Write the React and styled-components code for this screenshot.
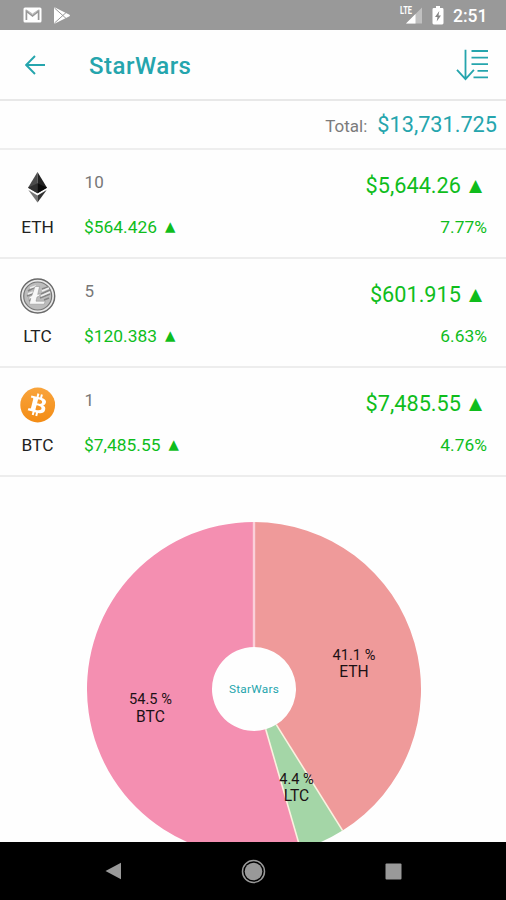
import React from "react";
import styled, { createGlobalStyle } from "styled-components";

const TEAL = "#25a5ad";
const GREEN = "#0fbd1c";

const GlobalStyle = createGlobalStyle`
  * { box-sizing: border-box; }
  html, body { margin: 0; padding: 0; background: #fff; overflow: hidden; }
  body { font-family: Roboto, "Liberation Sans", sans-serif; }
  svg { display: block; }
`;

const Screen = styled.div`
  width: 506px;
  height: 900px;
  display: flex;
  flex-direction: column;
  overflow: hidden;
  background: #fefefe;
`;

const StatusBar = styled.header`
  height: 30px;
  flex: none;
  display: flex;
  align-items: center;
  justify-content: space-between;
  padding: 0 19px 0 23px;
  background: #999;
`;

const StatusGroup = styled.div`
  display: flex;
  align-items: center;
  gap: ${(p) => p.$gap}px;
`;

const Clock = styled.span`
  color: #fff;
  font-size: 17.5px;
  font-weight: 500;
  line-height: 20px;
  margin-top: 2px;
  width: 34px;
  text-align: right;
`;

const AppBar = styled.div`
  height: 70.5px;
  flex: none;
  display: flex;
  align-items: center;
  padding: 1px 17px 0 25px;
  border-bottom: 2px solid #e8e8e8;
`;

const Title = styled.h1`
  flex: 1;
  margin: 2px 0 0 44px;
  color: ${TEAL};
  font-size: 24px;
  font-weight: 500;
  letter-spacing: 0.5px;
  line-height: 30px;
`;

const TotalBar = styled.div`
  height: 49.5px;
  flex: none;
  display: flex;
  align-items: baseline;
  justify-content: flex-end;
  gap: 10px;
  padding: 10.5px 9px 0 0;
  border-bottom: 2px solid #eee;
`;

const TotalLabel = styled.span`
  color: #7b7b7b;
  font-size: 17px;
`;

const TotalValue = styled.span`
  color: ${TEAL};
  font-size: 21.7px;
  line-height: 28px;
`;

const Row = styled.section`
  height: 109px;
  flex: none;
  display: grid;
  grid-template-columns: 75px 1fr auto;
  padding-right: 19px;
  border-bottom: 2px solid #ededed;
`;

const Cell = styled.div`
  display: grid;
  grid-template-rows: 54px 24px;
  row-gap: 2px;
  padding-top: 9px;
  align-items: center;
  justify-items: ${(p) => p.$align};
  padding-left: ${(p) => p.$left || 0}px;
`;

const CoinBadge = styled.div`
  padding-top: 2px;
`;

const Ticker = styled.span`
  color: #222;
  font-size: 17.3px;
  line-height: 24px;
`;

const Amount = styled.span`
  color: #777;
  font-size: 17px;
  line-height: 20px;
  margin-top: -8px;
  margin-left: 0.5px;
  letter-spacing: 0.2px;
`;

const Money = styled.span`
  display: flex;
  align-items: baseline;
  gap: 8px;
  color: ${GREEN};
  font-size: ${(p) => (p.$large ? 21.7 : 17.4)}px;
  line-height: 24px;
  margin-right: ${(p) => (p.$large ? 5 : 0)}px;
`;

const Up = styled.span`
  font-family: "DejaVu Sans", sans-serif;
  font-size: ${(p) => (p.$large ? 17 : 13.5)}px;
  line-height: 1;
  transform: translateY(-2px);
`;

const ChartArea = styled.main`
  flex: 1;
  min-height: 0;
  overflow: hidden;
  display: flex;
  justify-content: center;
  align-items: flex-start;
  padding: 45px 0 0 1px;
`;

const SliceLabel = styled.text`
  fill: #1c1115;
  font-size: ${(p) => p.$size}px;
  text-anchor: middle;
`;

const CenterLabel = styled.text`
  fill: ${TEAL};
  font-size: 11.8px;
  letter-spacing: 0.25px;
  text-anchor: middle;
`;

const NavBar = styled.nav`
  height: 58px;
  flex: none;
  display: flex;
  align-items: center;
  justify-content: space-between;
  padding: 0 104px 0 105px;
  background: #000;
`;

const MailIcon = () => (
  <svg width="19" height="16" viewBox="0 0 19 16">
    <rect x="0.5" y="0.5" width="18" height="15" rx="1.5" fill="#fff" />
    <path d="M3.4 13V4.2L9.5 9l6.1-4.8V13" fill="none" stroke="#999" strokeWidth="1.7" />
    <path d="M3.2 2.8L9.5 7l6.3-4.2" fill="none" stroke="#999" strokeWidth="0.7" />
  </svg>
);

const PlayIcon = () => (
  <svg width="18" height="17" viewBox="0 0 18 17">
    <path d="M1 1.2Q1 .2 2 .6L16.5 7.8Q17.5 8.5 16.5 9.2L2 16.4Q1 16.8 1 15.8Z" fill="#fff" />
    <path d="M1.5 1L13 11.4M1.5 16L13 5.6" fill="none" stroke="#999" strokeWidth="1" />
  </svg>
);

const SignalIcon = () => (
  <svg width="24" height="20" viewBox="0 0 24 20">
    <path d="M7 18.5L23 2.5V18.5Z" fill="#c0c0c0" />
    <path d="M7 18.5L16.5 9V18.5Z" fill="#fff" />
    <text x="1" y="9" fill="#fff" fontSize="10" fontWeight="700" textLength="12" lengthAdjust="spacingAndGlyphs">LTE</text>
  </svg>
);

const BatteryIcon = () => (
  <svg width="12" height="19" viewBox="0 0 12 19">
    <path d="M4 0h4v2h2.2Q11.5 2 11.5 3.4V17Q11.5 18.4 10.2 18.4H1.8Q.5 18.4 .5 17V3.4Q.5 2 1.8 2H4Z" fill="#fff" />
    <path d="M7.3 5L3 11h2.5L4.7 15.6 9 9.5H6.5Z" fill="#858585" />
  </svg>
);

const BackArrow = () => (
  <svg width="20" height="20" viewBox="0 0 20 20">
    <path d="M20 10H1.6M10 1L1.2 10l8.8 9" fill="none" stroke={TEAL} strokeWidth="1.9" />
  </svg>
);

const SortIcon = () => (
  <svg width="33" height="32" viewBox="0 0 33 32">
    <g fill="none" stroke={TEAL} strokeWidth="1.8">
      <path d="M9.5 .8V30M1 20.8l8.5 9.4 8.4-9.4" />
      <path d="M15.5 2H32M15.5 8.6H32M15.5 15.1H32M21.5 21.8H32M17.5 28.4H32" />
    </g>
  </svg>
);

const EthIcon = () => (
  <svg width="36" height="36" viewBox="0 0 36 36">
    <path d="M17.5 3L8 18.8 17.5 24.3Z" fill="#4b4b4b" />
    <path d="M17.5 3l9.5 15.8L17.5 24.3Z" fill="#222" />
    <path d="M17.5 14.2L8 18.8 17.5 24.3Z" fill="#303030" />
    <path d="M17.5 14.2l9.5 4.6L17.5 24.3Z" fill="#0b0b0b" />
    <path d="M8.3 21.1L17.5 26.5V33.6Z" fill="#777" />
    <path d="M26.7 21.1L17.5 26.5V33.6Z" fill="#333" />
  </svg>
);

const LtcIcon = () => (
  <svg width="36" height="36" viewBox="0 0 36 36">
    <circle cx="17.7" cy="18" r="17" fill="#e9e9e9" stroke="#696969" strokeWidth="1.4" />
    <circle cx="17.7" cy="18" r="14" fill="#bcbcbc" stroke="#777" strokeWidth="1.2" />
    <path d="M8 13l7-4M7 18l8-3M9 23l4-2M22 11l6-2M21 16l9-4M20 20l10-4M24 22l5-2" stroke="#858585" strokeWidth="1.6" />
    <path d="M10 10l6-2M8 16l5-2M22 13l7-3M21 18l9-4" stroke="#efefef" strokeWidth="1.4" />
    <path d="M15 8.5h4.5l-1.8 8 2.5-1-.7 2.5-2.5 1-1 4.2h9.2l-1 3H9.2l1.6-5.8-2.2.9.7-2.6 2.5-1Z" fill="#f7f7f7" stroke="#8a8a8a" strokeWidth="0.5" />
  </svg>
);

const BtcIcon = () => (
  <svg width="36" height="36" viewBox="0 0 36 36">
    <defs>
      <linearGradient id="btcFill" x1="0" y1="0" x2="0" y2="1">
        <stop offset="0" stopColor="#f9a43c" />
        <stop offset="1" stopColor="#f38c15" />
      </linearGradient>
    </defs>
    <circle cx="17.7" cy="18" r="17.4" fill="url(#btcFill)" />
    <g transform="translate(-0.2 -0.3) scale(1.13)">
      <path
        fill="#fff"
        fillRule="evenodd"
        d="M23.2 14c.3-2.1-1.3-3.3-3.5-4l.7-2.9-1.7-.4-.7 2.8-1.4-.3.7-2.8-1.7-.5-.7 2.9-4.6-1.1-.5 1.8s1.3.3 1.3.3c.7.2.8.6.8 1l-2 8c-.1.2-.3.5-.8.4l-1.3-.3-.8 2 4.3 1.1-.7 2.9 1.7.4.7-2.8 1.4.3-.7 2.9 1.7.4.7-2.9c3 .6 5.2.3 6.2-2.4.7-2.1 0-3.4-1.6-4.2 1.2-.3 2-1 2.3-2.6zm-4 5.6c-.6 2.1-4.2 1-5.4.7l1-3.8c1.1.3 4.9.8 4.4 3.1zm.5-5.6c-.5 2-3.4 1-4.4.7l.9-3.5c1 .3 4 .7 3.5 2.8z"
      />
    </g>
  </svg>
);

const CX = 167;
const CY = 167;
const R = 167;
const HOLE = 42;

const at = (r, share) => {
  const a = share * Math.PI * 2;
  return `${CX + r * Math.sin(a)} ${CY - r * Math.cos(a)}`;
};

const slicePath = (from, to) => {
  const big = to - from > 0.5 ? 1 : 0;
  return `M${at(HOLE, from)}L${at(R, from)}A${R} ${R} 0 ${big} 1 ${at(R, to)}L${at(HOLE, to)}A${HOLE} ${HOLE} 0 ${big} 0 ${at(HOLE, from)}Z`;
};

const slices = [
  { name: "ETH", pct: "41.1 %", from: 0, to: 0.411, fill: "#ef9a9a", x: 267, y: 138 },
  { name: "LTC", pct: "4.4 %", from: 0.411, to: 0.455, fill: "#a4d6a7", x: 209.5, y: 262 },
  { name: "BTC", pct: "54.5 %", from: 0.455, to: 1, fill: "#f48fb1", x: 63.5, y: 182.3 },
];

const Pie = () => (
  <svg width="334" height="334" viewBox="0 0 334 334">
    {slices.map((s) => (
      <path key={s.name} d={slicePath(s.from, s.to)} fill={s.fill} />
    ))}
    {slices.map((s) => (
      <path key={s.name} d={`M${at(HOLE, s.to)}L${at(R, s.to)}`} stroke={s.to === 1 ? "#fbd0da" : "#fbf1e0"} strokeWidth={s.to === 1 ? 2.4 : 1.6} />
    ))}
    {slices.map((s) => (
      <g key={s.name}>
        <SliceLabel x={s.x} y={s.y} $size={14.6}>{s.pct}</SliceLabel>
        <SliceLabel x={s.x} y={s.y + 17.3} $size={15.6}>{s.name}</SliceLabel>
      </g>
    ))}
    <CenterLabel x={CX} y={CY + 3.5}>StarWars</CenterLabel>
  </svg>
);

const coins = [
  { name: "ETH", icon: EthIcon, amount: "10", price: "$564.426", value: "$5,644.26", change: "7.77%" },
  { name: "LTC", icon: LtcIcon, amount: "5", price: "$120.383", value: "$601.915", change: "6.63%" },
  { name: "BTC", icon: BtcIcon, amount: "1", price: "$7,485.55", value: "$7,485.55", change: "4.76%" },
];

const Price = ({ children, large }) => (
  <Money $large={large}>
    <span>{children}</span>
    <Up $large={large}>▲</Up>
  </Money>
);

const CoinRow = ({ coin }) => {
  const Icon = coin.icon;
  return (
    <Row>
      <Cell $align="center">
        <CoinBadge>
          <Icon />
        </CoinBadge>
        <Ticker>{coin.name}</Ticker>
      </Cell>
      <Cell $align="start" $left={9}>
        <Amount>{coin.amount}</Amount>
        <Price>{coin.price}</Price>
      </Cell>
      <Cell $align="end">
        <Price large>{coin.value}</Price>
        <Money>{coin.change}</Money>
      </Cell>
    </Row>
  );
};

export default function App() {
  return (
    <>
      <GlobalStyle />
      <Screen>
        <StatusBar>
          <StatusGroup $gap={11}>
            <MailIcon />
            <PlayIcon />
          </StatusGroup>
          <StatusGroup $gap={9}>
            <SignalIcon />
            <BatteryIcon />
            <Clock>2:51</Clock>
          </StatusGroup>
        </StatusBar>
        <AppBar>
          <BackArrow />
          <Title>StarWars</Title>
          <SortIcon />
        </AppBar>
        <TotalBar>
          <TotalLabel>Total:</TotalLabel>
          <TotalValue>$13,731.725</TotalValue>
        </TotalBar>
        {coins.map((c) => (
          <CoinRow key={c.name} coin={c} />
        ))}
        <ChartArea>
          <Pie />
        </ChartArea>
        <NavBar>
          <svg width="17" height="18" viewBox="0 0 17 18"><path d="M.5 9L16 .8V17.2Z" fill="#999" /></svg>
          <svg width="25" height="25" viewBox="0 0 25 25">
            <circle cx="12.5" cy="12.5" r="11" fill="none" stroke="#999" strokeWidth="1.5" />
            <circle cx="12.5" cy="12.5" r="8.8" fill="#999" />
          </svg>
          <svg width="17" height="17" viewBox="0 0 17 17"><rect x="0.5" y="0.5" width="16" height="16" rx="1" fill="#999" /></svg>
        </NavBar>
      </Screen>
    </>
  );
}
